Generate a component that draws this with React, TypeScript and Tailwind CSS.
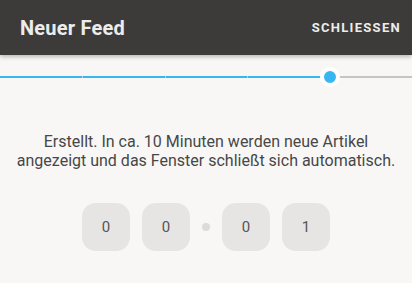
const digits = ['0', '0', null, '0', '1']

export default function App() {
  return (
    <div className="h-[283px] w-[412px] overflow-hidden bg-[#f8f7f6]" style={{ fontFamily: 'Roboto, sans-serif' }}>
      <header className="relative z-10 flex h-[55px] items-center justify-between bg-[#3c3b39] pl-5 pr-[11px] shadow-[0_2px_4px_rgba(0,0,0,0.25)]">
        <h1 className="text-[20px] font-bold tracking-[0.2px] text-[#ececec]">Neuer Feed</h1>
        <button className="text-[13px] font-bold tracking-[1.3px] text-[#ececec]">SCHLIESSEN</button>
      </header>

      <div className="relative mt-[20px] flex h-[4px] items-center">
        <div className="flex h-[2px] w-[330px]">
          <div className="h-full flex-1 bg-[#38b6f2]" />
          <div className="h-full w-px bg-[#c8c8c8]" />
          <div className="h-full flex-1 bg-[#38b6f2]" />
          <div className="h-full w-px bg-[#c8c8c8]" />
          <div className="h-full flex-1 bg-[#38b6f2]" />
          <div className="h-full w-px bg-[#c8c8c8]" />
          <div className="h-full flex-1 bg-[#38b6f2]" />
        </div>
        <div className="h-[2px] flex-1 bg-[#c6c5c4]" />
        <div className="absolute left-[320px] top-1/2 h-[20px] w-[20px] -translate-y-1/2 rounded-full border-[4px] border-white bg-[#38b6f2]" />
      </div>

      <p className="mt-[53px] text-center text-[16px] leading-[19px] text-[#474747]">
        Erstellt. In ca. 10 Minuten werden neue Artikel
        <br />
        angezeigt und das Fenster schließt sich automatisch.
      </p>

      <div className="mt-[33px] flex items-center justify-center gap-3">
        {digits.map((d, i) =>
          d === null ? (
            <div key={i} className="h-2 w-2 rounded-full bg-[#dcdbda]" />
          ) : (
            <div
              key={i}
              className="flex h-12 w-12 items-center justify-center rounded-[14px] bg-[#e6e5e4] text-[15px] text-[#555]"
            >
              {d}
            </div>
          ),
        )}
      </div>
    </div>
  )
}
